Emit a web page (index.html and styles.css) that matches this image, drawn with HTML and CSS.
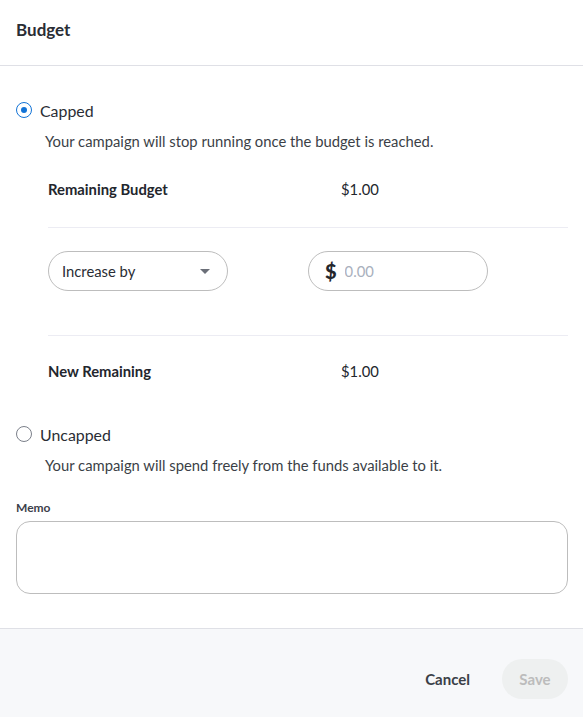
FILE: index.html
```html
<!doctype html>
<html>
<head>
	<meta name="viewport" content="width=device-width, initial-scale=1.0">
	<title>Budget</title>
	<link rel="stylesheet" href="styles.css">
</head>
<body>

	<div class="modal">
		<div class="modal-header">Budget</div>

		<div class="modal-body">
			<label class="radio">
				<span class="radio-dot checked"></span>
				<span class="radio-label">Capped</span>
			</label>
			<p class="hint">Your campaign will stop running once the budget is reached.</p>

			<div class="budget-box">
				<div class="budget-row">
					<span class="budget-name">Remaining Budget</span>
					<span class="budget-value">$1.00</span>
				</div>
				<div class="budget-edit">
					<div class="select">
						<span>Increase by</span>
						<span class="caret"></span>
					</div>
					<div class="money">
						<span class="money-sign">$</span>
						<input type="text" placeholder="0.00">
					</div>
				</div>
				<div class="budget-row">
					<span class="budget-name">New Remaining</span>
					<span class="budget-value">$1.00</span>
				</div>
			</div>

			<label class="radio">
				<span class="radio-dot"></span>
				<span class="radio-label">Uncapped</span>
			</label>
			<p class="hint">Your campaign will spend freely from the funds available to it.</p>

			<div class="memo">
				<div class="memo-label">Memo</div>
				<textarea></textarea>
			</div>
		</div>

		<div class="modal-footer">
			<button class="btn-link">Cancel</button>
			<button class="btn-save" disabled>Save</button>
		</div>
	</div>

</body>
</html>
```

FILE: styles.css
```css
* {
	box-sizing: border-box;
}
body {
	margin: 0;
	background: #fff;
	font-family: Lato, "Noto Sans", sans-serif;
	color: #222;
}
.modal {
	width: 583px;
	height: 717px;
	display: flex;
	flex-direction: column;
}
.modal-header {
	height: 66px;
	padding: 19px 16px 0 16px;
	font-size: 17px;
	font-weight: bold;
	color: #2a2d34;
	border-bottom: 1px solid #dfe0e6;
}
.modal-body {
	flex: 1;
	padding: 34px 15px 0 16px;
}
.radio {
	display: flex;
	align-items: center;
	height: 20px;
	cursor: pointer;
}
.radio-dot {
	width: 16px;
	height: 16px;
	border: 1.5px solid #7b808a;
	border-radius: 50%;
	margin: 0 8px 0 0;
	position: relative;
}
.radio-dot.checked {
	border-color: #1273d6;
}
.radio-dot.checked::after {
	content: "";
	position: absolute;
	left: 3.5px;
	top: 3.5px;
	width: 6px;
	height: 6px;
	border-radius: 50%;
	background: #1273d6;
}
.radio-label {
	font-size: 15.9px;
	color: #2a2d34;
}
.hint {
	margin: 12px 0 0 29px;
	font-size: 14.8px;
	color: #3b3f47;
}
.budget-box {
	margin: 28px 0 42px 32px;
}
.budget-row {
	display: flex;
	height: 22px;
	align-items: center;
	font-size: 14.8px;
}
.budget-name {
	width: 293px;
	font-weight: bold;
	color: #23262d;
}
.budget-value {
	color: #23262d;
}
.budget-edit {
	display: flex;
	gap: 80px;
	margin: 27px 0 24px 0;
	padding: 23px 0 44px 0;
	border-top: 1px solid #ececf3;
	border-bottom: 1px solid #ececf3;
}
.select {
	width: 180px;
	height: 40px;
	border: 1px solid #bdbdbd;
	border-radius: 20px;
	padding: 0 17px 0 13px;
	display: flex;
	align-items: center;
	justify-content: space-between;
	font-size: 14.8px;
	color: #2a2d34;
}
.caret {
	width: 0;
	height: 0;
	border-left: 5px solid transparent;
	border-right: 5px solid transparent;
	border-top: 5px solid #6b6f78;
}
.money {
	width: 180px;
	height: 40px;
	border: 1px solid #bdbdbd;
	border-radius: 20px;
	padding: 0 16px;
	display: flex;
	align-items: center;
	gap: 8px;
}
.money-sign {
	font-size: 20px;
	font-weight: 900;
	color: #23262d;
}
.money input {
	border: none;
	outline: none;
	width: 100px;
	font-family: inherit;
	font-size: 14.8px;
	padding: 0;
	background: transparent;
}
.money input::placeholder {
	color: #a9b0bd;
}
.memo {
	margin-top: 26px;
}
.memo-label {
	font-size: 12px;
	font-weight: bold;
	color: #3d414a;
	margin-bottom: 6px;
}
.memo textarea {
	display: block;
	width: 552px;
	height: 73px;
	border: 1px solid #bdbdbd;
	border-radius: 14px;
	resize: none;
	outline: none;
}
.modal-footer {
	height: 89px;
	background: #f7f8fa;
	border-top: 1px solid #dfe0e6;
	display: flex;
	align-items: center;
	justify-content: flex-end;
	padding: 12px 15px 0 0;
	gap: 32px;
}
button {
	font-family: inherit;
	font-size: 15px;
	font-weight: bold;
	border: none;
	cursor: pointer;
}
.btn-link {
	background: transparent;
	color: #3b3f47;
	padding: 0;
}
.btn-save {
	background: #eef0f0;
	color: #bcbcbc;
	width: 66px;
	height: 40px;
	border-radius: 20px;
}
```
